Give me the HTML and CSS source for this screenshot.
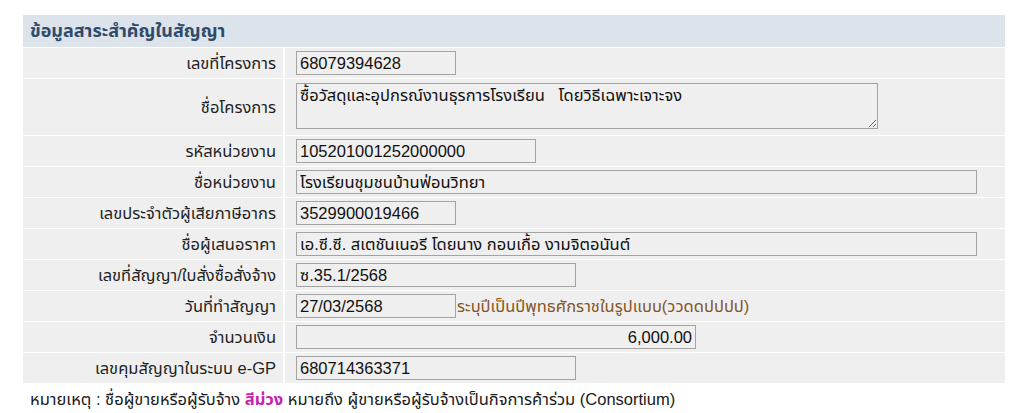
FILE: index.html
```html
<!DOCTYPE html>
<html lang="th">
<head>
<meta charset="utf-8">
<title>ข้อมูลสาระสำคัญในสัญญา</title>
<link rel="stylesheet" href="styles.css">
</head>
<body>
<div class="panel">
  <div class="panel-head">ข้อมูลสาระสำคัญในสัญญา</div>
  <div class="rows">
    <div class="label">เลขที่โครงการ</div>
    <div class="field"><input class="box w160" type="text" readonly value="68079394628"></div>

    <div class="label tall">ชื่อโครงการ</div>
    <div class="field tall"><textarea class="area" readonly>ซื้อวัสดุและอุปกรณ์งานธุรการโรงเรียน   โดยวิธีเฉพาะเจาะจง</textarea></div>

    <div class="label">รหัสหน่วยงาน</div>
    <div class="field"><input class="box w240" type="text" readonly value="105201001252000000"></div>

    <div class="label">ชื่อหน่วยงาน</div>
    <div class="field"><input class="box w681" type="text" readonly value="โรงเรียนชุมชนบ้านฟ่อนวิทยา"></div>

    <div class="label">เลขประจำตัวผู้เสียภาษีอากร</div>
    <div class="field"><input class="box w160" type="text" readonly value="3529900019466"></div>

    <div class="label">ชื่อผู้เสนอราคา</div>
    <div class="field"><input class="box w681" type="text" readonly value="เอ.ซี.ซี. สเตชันเนอรี โดยนาง กอบเกื้อ งามจิตอนันต์"></div>

    <div class="label">เลขที่สัญญา/ใบสั่งซื้อสั่งจ้าง</div>
    <div class="field"><input class="box w280" type="text" readonly value="ซ.35.1/2568"></div>

    <div class="label">วันที่ทำสัญญา</div>
    <div class="field"><input class="box w160" type="text" readonly value="27/03/2568"><span class="hint">ระบุปีเป็นปีพุทธศักราชในรูปแบบ(ววดดปปปป)</span></div>

    <div class="label">จำนวนเงิน</div>
    <div class="field"><input class="box w400 num" type="text" readonly value="6,000.00"></div>

    <div class="label">เลขคุมสัญญาในระบบ e-GP</div>
    <div class="field"><input class="box w280" type="text" readonly value="680714363371"></div>
  </div>
</div>
<p class="note">หมายเหตุ : ชื่อผู้ขายหรือผู้รับจ้าง <span class="purple">สีม่วง</span> หมายถึง ผู้ขายหรือผู้รับจ้างเป็นกิจการค้าร่วม (Consortium)</p>
</body>
</html>
```

FILE: styles.css
```css
html, body {
  margin: 0;
  background: #ffffff;
}

body {
  font-family: "Liberation Sans", "Noto Sans Thai", Tahoma, sans-serif;
  font-size: 16.5px;
  color: #1a1a1a;
}

.panel {
  width: 982px;
  margin: 15px 0 0 23px;
}

.panel-head {
  height: 32px;
  line-height: 32px;
  padding-left: 7px;
  background: #dce3ea;
  color: #2f4b6c;
  font-weight: bold;
  font-size: 18px;
}

/* label / value grid with thin white rules between cells */
.rows {
  display: grid;
  grid-template-columns: 260px 1fr;
  column-gap: 2px;
  row-gap: 1px;
  padding-top: 1px;
  background: #ffffff;
}

.label,
.field {
  background: #efefef;
  height: 30px;
  display: flex;
  align-items: center;
}

.label {
  justify-content: flex-end;
  padding-right: 7px;
  color: #1f1f1f;
}

.field {
  padding-left: 11px;
}

.label.tall,
.field.tall {
  height: 56px;
}

.field.tall {
  align-items: flex-start;
  padding-top: 4px;
  box-sizing: border-box;
}

.box {
  box-sizing: border-box;
  height: 24px;
  padding: 0 3px;
  margin: 0;
  border: 1px solid #a3a3a3;
  border-radius: 0;
  background: #efefef;
  font: inherit;
  color: #111;
  outline: none;
}

.w160 { width: 160px; }
.w240 { width: 240px; }
.w280 { width: 280px; }
.w400 { width: 400px; }
.w681 { width: 681px; }

.num {
  text-align: right;
}

.area {
  display: block;
  box-sizing: border-box;
  width: 582px;
  height: 46px;
  margin: 0;
  padding: 1px 3px;
  border: 1px solid #a3a3a3;
  border-radius: 0;
  background: #efefef;
  font: inherit;
  line-height: 20px;
  color: #111;
  outline: none;
  resize: both;
  white-space: pre-wrap;
}

.hint {
  margin-left: 1px;
  color: #85561f;
  white-space: nowrap;
}

.note {
  margin: 5px 0 0 30px;
  line-height: 22px;
  color: #1a1a1a;
}

.purple {
  color: #c722b0;
  font-weight: bold;
}
```
